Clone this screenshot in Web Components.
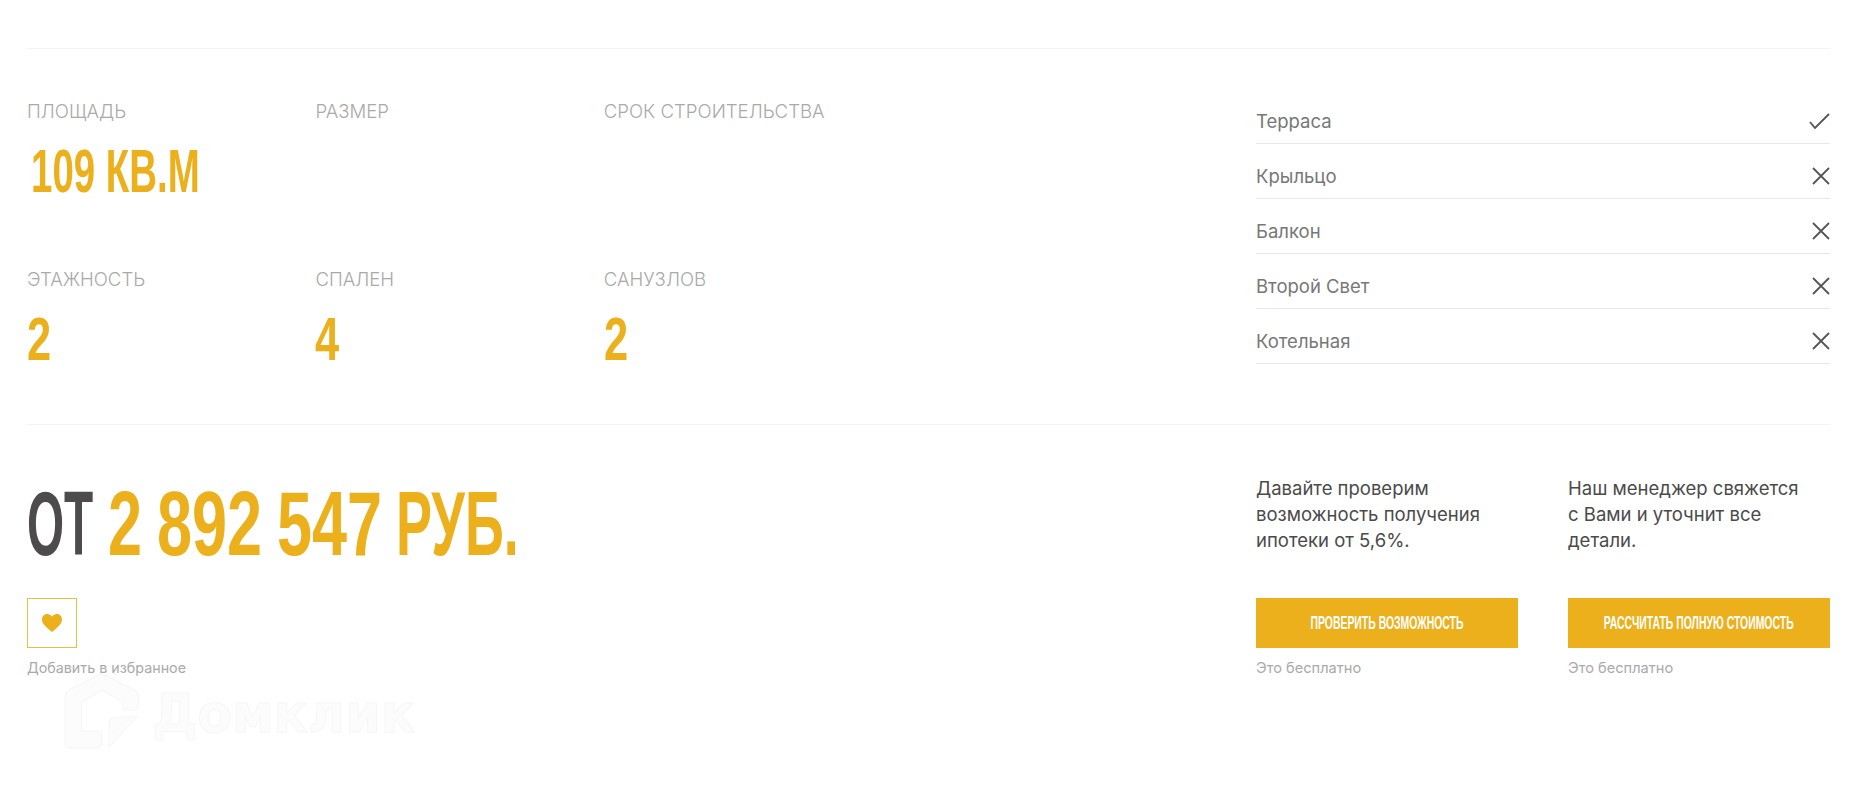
<!doctype html>
<html lang="ru"><head><meta charset="utf-8"><title>Дом</title>
<style>
html,body{margin:0;padding:0;background:#fff}
body{font-family:Inter,"Liberation Sans",sans-serif;--gold:#ebb01c;--disp:"Liberation Sans",sans-serif}
</style></head><body>
<house-card>
  <stat-item slot="stats" label="ПЛОЩАДЬ" value="109 КВ.М" style="--nudge:4px;--sx:.62"></stat-item>
  <stat-item slot="stats" label="РАЗМЕР"></stat-item>
  <stat-item slot="stats" label="СРОК СТРОИТЕЛЬСТВА"></stat-item>
  <stat-item slot="stats" label="ЭТАЖНОСТЬ" value="2"></stat-item>
  <stat-item slot="stats" label="СПАЛЕН" value="4"></stat-item>
  <stat-item slot="stats" label="САНУЗЛОВ" value="2"></stat-item>
  <feature-row slot="features" yes>Терраса</feature-row>
  <feature-row slot="features">Крыльцо</feature-row>
  <feature-row slot="features">Балкон</feature-row>
  <feature-row slot="features">Второй Свет</feature-row>
  <feature-row slot="features">Котельная</feature-row>
  <price-block slot="price"></price-block>
  <offer-block slot="offers" button="ПРОВЕРИТЬ ВОЗМОЖНОСТЬ">Давайте проверим<br>возможность получения<br>ипотеки от 5,6%.</offer-block>
  <offer-block slot="offers" button="РАССЧИТАТЬ ПОЛНУЮ СТОИМОСТЬ">Наш менеджер свяжется<br>с Вами и уточнит все<br>детали.</offer-block>
</house-card>
<script>
function def(name, html){
  customElements.define(name, class extends HTMLElement{
    constructor(){super();this.attachShadow({mode:'open'});}
    connectedCallback(){this.shadowRoot.innerHTML=html(this);}
  });
}
def('house-card',()=>`<style>
:host{display:block;position:relative;box-sizing:border-box;height:801px;margin:0 30px 0 27px;padding-top:48px;overflow:hidden}
.top{border-top:1px solid #f4f4f4;display:grid;grid-template-columns:1fr 574px;padding-bottom:56px}
.stats{display:grid;grid-template-columns:repeat(3,288.4px);grid-auto-rows:101px;row-gap:67px;padding-top:50px}
.feat{padding-top:40px;display:block}
.bottom{border-top:1px solid #f4f4f4;display:grid;grid-template-columns:1fr 574px;padding-top:50px}
.offers{display:grid;grid-template-columns:262px 262px;column-gap:50px}
.mark{position:absolute;left:38px;top:673px;display:flex;align-items:flex-start;gap:13px}
.mark svg{display:block;overflow:visible}
.mark span{font:700 54px/60px "DejaVu Sans",sans-serif;color:#fcfcfc;-webkit-text-stroke:1px #f6f6f6;margin-top:11px;display:inline-block;transform:scaleX(.94);transform-origin:left}
</style>
<div class="top"><div class="stats"><slot name="stats"></slot></div><div class="feat"><slot name="features"></slot></div></div>
<div class="bottom"><div><slot name="price"></slot></div><div class="offers"><slot name="offers"></slot></div></div>
<div class="mark"><svg width="74" height="76" viewBox="65 673 74 76" fill="#fcfcfc" stroke="#f5f5f5"><path d="M65 697Q65 692 69 690L99 675Q102 673.500 105 675L134 690Q138.500 692 138.500 697V706Q138.500 710 134 710H123V702L101.700 690 81.700 702V731H101.700V743Q101.700 748 97 748H71Q65 748 65 742Z"/><path d="M109 747V723Q109 717 115 717H137Z"/></svg><span>Домклик</span></div>`);
def('stat-item',el=>`<style>
:host{display:block}
.l{font:300 18.6px/24px Inter,"Liberation Sans",sans-serif;color:#a9a9a9;white-space:nowrap}
.v{font:700 62px/60px var(--disp);color:var(--gold);margin-top:18px;margin-left:var(--nudge,0);white-space:nowrap;width:max-content;transform:scaleX(var(--sx,.7));transform-origin:left}
</style><div class="l">${el.getAttribute('label')}</div>${el.getAttribute('value')?`<div class="v">${el.getAttribute('value')}</div>`:''}`);
def('feature-row',el=>`<style>
:host{display:flex;justify-content:space-between;align-items:center;height:24px;padding:20px 0 10px;border-bottom:1px solid #e8e8e8;font:400 18.5px/24px Inter,"Liberation Sans",sans-serif;color:#777}
svg{display:block}
</style><slot></slot>${el.hasAttribute('yes')
?`<svg width="21" height="16" viewBox="0 0 21 16" fill="none" stroke="#555" stroke-width="1.8"><path d="M1 9 6 15 20 1"/></svg>`
:`<svg width="18" height="18" viewBox="0 0 18 18" fill="none" stroke="#555" stroke-width="1.8"><path d="M1 1 17 17M17 1 1 17"/></svg>`}`);
def('price-block',()=>`<style>
:host{display:block}
.p{font:700 90px/98px var(--disp);color:var(--gold);white-space:nowrap}
.p span{display:inline-block;transform-origin:left}
.o{color:#4e4b4c;width:56px;transform:scaleX(.53)}
.d1{width:24px;transform:scaleX(.68)}
.d3{width:94.5px;transform:scaleX(.7)}
.w{transform:scaleX(.6)}
.h{box-sizing:border-box;width:50px;height:50px;border:1px solid #e6c040;margin-top:25px;display:flex;align-items:center;justify-content:center}
.c{font:400 14.3px/24px Inter,"Liberation Sans",sans-serif;color:#aaa;margin-top:8px}
</style><div class="p"><span class="o">ОТ</span> <span class="d1">2</span> <span class="d3">892</span> <span class="d3">547</span> <span class="w">РУБ.</span></div>
<div class="h"><svg width="20" height="18" viewBox="0 0 20 18" fill="#ebb01c"><path d="M10 18C4 13 0 10 0 5.500 0 2 2.500 0 5.200 0 7.200 0 9 1 10 2.800 11 1 12.800 0 14.800 0 17.500 0 20 2 20 5.500 20 10 16 13 10 18Z"/></svg></div>
<div class="c">Добавить в избранное</div>`);
def('offer-block',el=>`<style>
:host{display:block}
.t{font:400 18.5px/26px Inter,"Liberation Sans",sans-serif;color:#4a4a4a;height:123px;white-space:nowrap}
.b{height:50px;background:var(--gold);color:#fff;display:flex;align-items:center;justify-content:center;overflow:hidden}
.b span{font:700 18px/24px var(--disp);white-space:nowrap;flex:none;transform:scaleX(.58)}
.c{font:400 14.6px/24px Inter,"Liberation Sans",sans-serif;color:#aaa;margin-top:8px}
</style><div class="t"><slot></slot></div><div class="b"><span>${el.getAttribute('button')}</span></div><div class="c">Это бесплатно</div>`);
</script>
</body></html>
